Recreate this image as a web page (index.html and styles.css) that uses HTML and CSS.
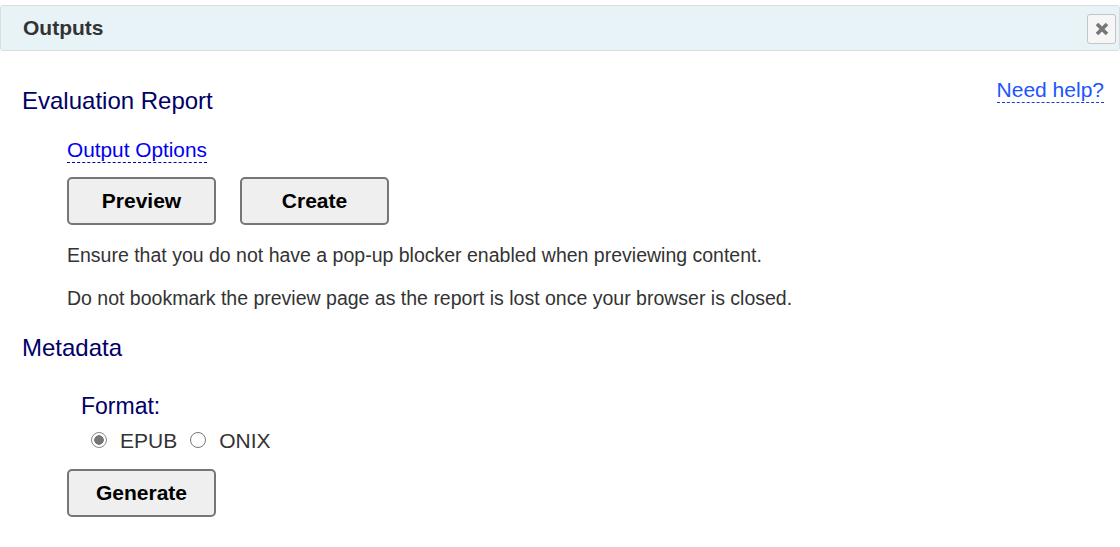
FILE: index.html
```html
<!DOCTYPE html>
<html>
<head>
<meta charset="utf-8">
<link rel="stylesheet" href="styles.css">
</head>
<body>
<div class="dialog">
  <div class="titlebar">
    <span class="title">Outputs</span>
    <button class="close" aria-label="Close">
      <svg width="14" height="14" viewBox="0 0 14 14"><path d="M2 2 L12 12 M12 2 L2 12" stroke="#777" stroke-width="3.6" stroke-linecap="butt"/></svg>
    </button>
  </div>
  <div class="content">
    <div class="head-row">
      <h2 class="section">Evaluation Report</h2>
      <a class="help" href="#">Need help?</a>
    </div>
    <div class="indent">
      <a class="options" href="#">Output Options</a>
      <div class="buttons">
        <button class="btn">Preview</button>
        <button class="btn">Create</button>
      </div>
      <p class="note">Ensure that you do not have a pop-up blocker enabled when previewing content.</p>
      <p class="note">Do not bookmark the preview page as the report is lost once your browser is closed.</p>
    </div>
    <h2 class="section meta">Metadata</h2>
    <div class="indent">
      <div class="format-label">Format:</div>
      <div class="radios">
        <label class="radio"><span class="dot checked"></span>EPUB</label>
        <label class="radio"><span class="dot"></span>ONIX</label>
      </div>
      <button class="btn">Generate</button>
    </div>
  </div>
</div>
</body>
</html>
```
FILE: styles.css
```css
html, body { margin: 0; padding: 0; background: #fff; }
body { font-family: "Liberation Sans", Arial, sans-serif; }
.dialog { padding-top: 5px; }
.titlebar {
  height: 44px;
  border: 1px solid #dddddd;
  border-radius: 3px;
  background: #e8f3f8;
  display: flex;
  align-items: center;
  justify-content: space-between;
  padding: 0 3px 0 22px;
}
.title { font-weight: bold; font-size: 21px; color: #333; margin-top: -1px; }
.close {
  width: 29px; height: 30px;
  border: 1px solid #c5c5c5;
  border-radius: 3px;
  background: #f6f6f6;
  display: flex; align-items: center; justify-content: center;
  padding: 0; margin: 0;
  margin-top: 2px;
}
.content { padding: 0 16px 0 22px; }
.head-row { display: flex; justify-content: space-between; align-items: flex-start; }
.section {
  font-weight: normal;
  font-size: 24px;
  line-height: 28px;
  color: #000066;
  margin: 0;
}
.head-row .section { margin-top: 36px; }
.help {
  margin-top: 27px;
  font-size: 21px;
  line-height: 24px;
  color: #1a55ff;
  text-decoration: none;
  border-bottom: 1px dashed #1a3dcc;
}
.indent { padding-left: 45px; }
.options {
  display: inline-block;
  margin-top: 23px;
  font-size: 20.8px;
  line-height: 24px;
  color: #0000ee;
  text-decoration: none;
  border-bottom: 1px dashed #0000aa;
}
.buttons { display: flex; gap: 24px; margin-top: 14px; }
.btn {
  width: 149px; height: 48px;
  border: 2px solid #767676;
  border-radius: 5px;
  background: #efefef;
  font-family: "Liberation Sans", Arial, sans-serif;
  font-weight: bold;
  font-size: 21px;
  color: #000;
  padding: 0;
}
.note { font-size: 19.5px; color: #333; margin: 0; line-height: 24px; }
.buttons + .note { margin-top: 18px; }
.note + .note { margin-top: 19px; }
.section.meta { margin-top: 24px; }
.format-label { font-size: 23px; line-height: 26px; color: #000066; margin-top: 31px; padding-left: 14px; }
.radios { display: flex; align-items: center; margin-top: 10px; padding-left: 24px; font-size: 21px; line-height: 24px; color: #333; }
.radio { display: flex; align-items: center; margin-right: 13px; }
.dot {
  width: 16px; height: 16px;
  border: 1px solid #767676;
  border-radius: 50%;
  box-sizing: border-box;
  margin-right: 13px;
  margin-top: -3px;
  background: #fff;
}
.dot.checked {
  border-color: #888;
  background: radial-gradient(circle, #777 0 4.5px, #fff 5px);
}
.radios + .btn { margin-top: 16px; }
```
